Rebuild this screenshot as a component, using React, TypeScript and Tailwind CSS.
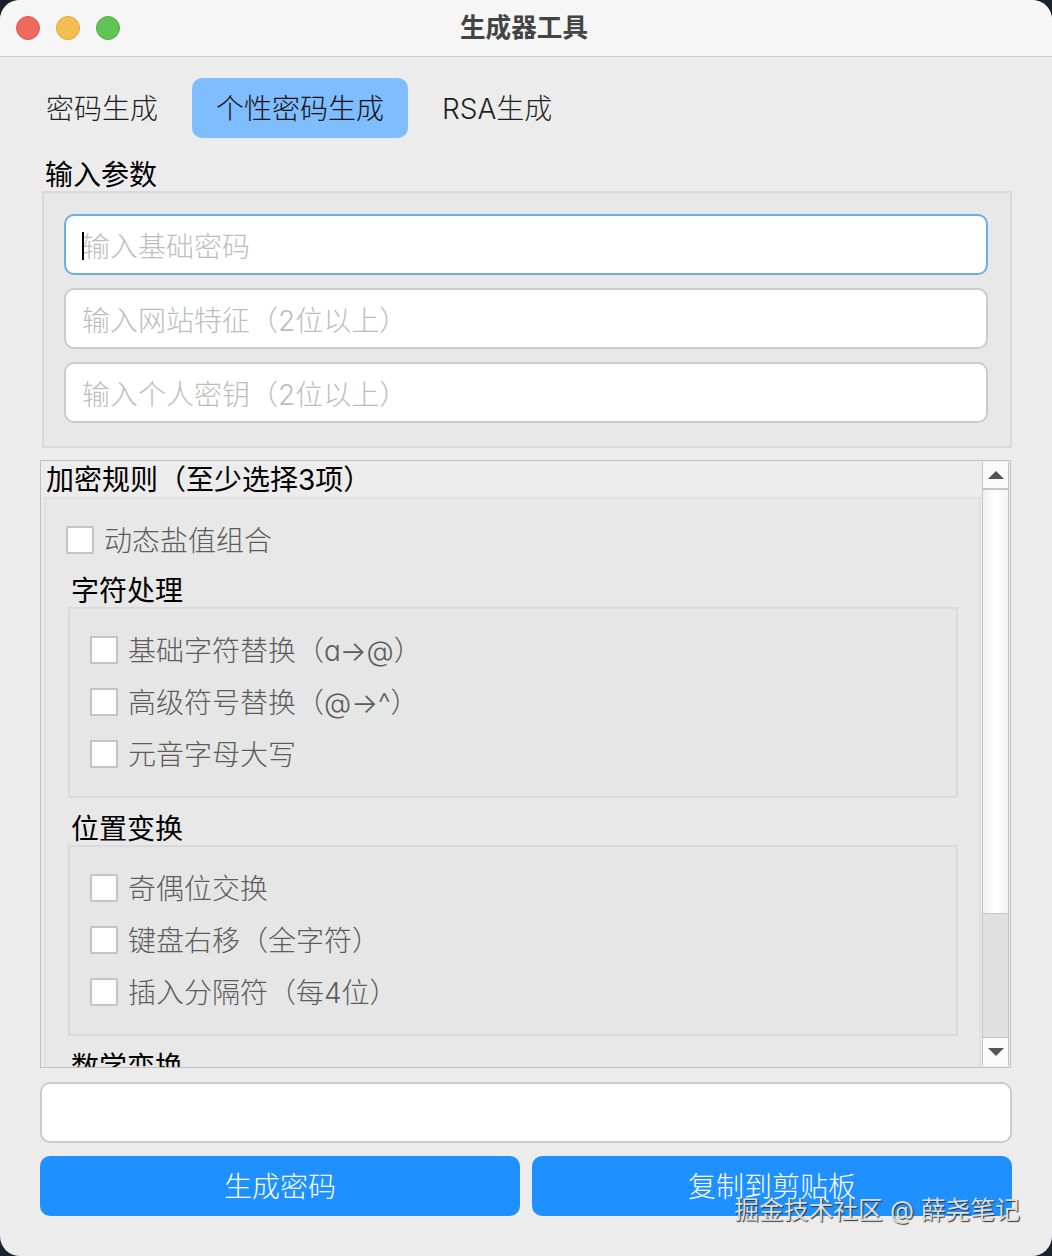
const FONT = "[font-family:'Inter','Noto_Sans_CJK_SC',sans-serif] [font-feature-settings:'cv11']";

function Check({ label }: { label: string }) {
  return (
    <div className="flex h-7 items-center gap-[10px]">
      <span className="h-7 w-7 shrink-0 border-2 border-[#c4c4c4] bg-white" />
      <span className="pt-0.5 text-[28px] leading-7 font-light text-[#5c5c5c]">{label}</span>
    </div>
  );
}

function Section({ title, items }: { title: string; items: string[] }) {
  return (
    <div className="ml-0.5 mt-3 first:mt-0">
      <div className="ml-[3px] h-[35px] text-[28px] leading-[38px] text-black">{title}</div>
      <div className="flex h-[191px] w-[890px] flex-col gap-6 border-2 border-[#dadada] bg-[#e6e6e6] pl-5 pt-[27px]">
        {items.map((item) => (
          <Check key={item} label={item} />
        ))}
      </div>
    </div>
  );
}

function ScrollBar() {
  return (
    <div className="flex h-[604px] w-[27px] shrink-0 flex-col border-x border-[#c4c4c4]">
      <div className="flex h-7 items-center justify-center border-b-2 border-[#c4c4c4] bg-[#fafafa]">
        <svg width="16" height="8" viewBox="0 0 16 8">
          <path d="M8 0L16 8H0Z" fill="#555555" />
        </svg>
      </div>
      <div className="h-[423px] bg-gradient-to-r from-[#f2f2f2] via-white to-[#f4f4f4]" />
      <div className="h-[125px] border-y border-[#c4c4c4] bg-[#e0e0e0]" />
      <div className="flex h-7 items-center justify-center bg-[#fafafa]">
        <svg width="16" height="8" viewBox="0 0 16 8">
          <path d="M0 0H16L8 8Z" fill="#555555" />
        </svg>
      </div>
    </div>
  );
}

export default function App() {
  const inputClass =
    'h-[61px] w-full rounded-[10px] border-2 bg-white px-4 pt-1 text-[28px] font-light outline-none placeholder:text-[#bdbdbd]';

  return (
    <div className={`h-[1256px] w-[1052px] overflow-hidden bg-[#1a2230] ${FONT}`}>
      <div className="relative flex h-full flex-col overflow-hidden rounded-[20px] bg-[#ececec]">
        {/* Title bar */}
        <div className="relative flex h-[57px] shrink-0 items-center justify-center border-b border-[#d0d0d0] bg-[#f6f6f6]">
          <div className="absolute left-4 top-4 flex gap-4">
            <span className="h-6 w-6 rounded-full border border-[#dc5c52] bg-[#ee6a5f]" />
            <span className="h-6 w-6 rounded-full border border-[#dea63f] bg-[#f5bd4f]" />
            <span className="h-6 w-6 rounded-full border border-[#53ad47] bg-[#61c454]" />
          </div>
          <span className="mr-1 text-[25.6px] font-bold text-[#444444]">生成器工具</span>
        </div>

        <div className="flex flex-col px-10">
          {/* Tabs */}
          <div className="-ml-[18px] mt-[21px] flex gap-[10px] text-[28px] font-light text-[#1f1f1f]">
            <div className="flex h-[60px] items-center px-6 pt-0.5">密码生成</div>
            <div className="flex h-[60px] items-center rounded-[10px] bg-[#80bdff] px-6 pt-0.5 text-[#111111]">个性密码生成</div>
            <div className="flex h-[60px] items-center px-6 pt-0.5">RSA生成</div>
          </div>

          {/* Input params */}
          <div className="ml-[5px] mt-[18px] h-[35px] text-[28px] leading-[38px] text-black">输入参数</div>
          <div className="relative ml-[2px] flex h-[257px] flex-col gap-[13px] border-2 border-[#dadada] bg-[#e8e8e8] pl-5 pr-[22px] pt-[21px]">
            <input className={`${inputClass} border-[#6aaee6]`} placeholder="输入基础密码" readOnly />
            <input className={`${inputClass} border-[#cbcbcb]`} placeholder="输入网站特征（2位以上）" readOnly />
            <input className={`${inputClass} border-[#cbcbcb]`} placeholder="输入个人密钥（2位以上）" readOnly />
            <span className="absolute left-[38px] top-[39px] h-7 w-0.5 bg-black" />
          </div>

          {/* Rules scroll area */}
          <div className="mt-3 flex h-[608px] w-[971px] items-start overflow-hidden border border-[#c0c0c0] bg-[#ececec]">
            <div className="h-[606px] w-[941px] shrink-0 overflow-hidden pl-[3px]">
              <div className="ml-[2px] h-9 text-[28px] leading-[38px] text-black">加密规则（至少选择3项）</div>
              <div className="h-[700px] w-[937px] border-2 border-[#e0e0e0] bg-[#e8e8e8] pl-5 pt-[27px]">
                <div className="mb-[18px]">
                  <Check label="动态盐值组合" />
                </div>
                <Section title="字符处理" items={['基础字符替换（a→@）', '高级符号替换（@→^）', '元音字母大写']} />
                <Section title="位置变换" items={['奇偶位交换', '键盘右移（全字符）', '插入分隔符（每4位）']} />
                <Section title="数学变换" items={[]} />
              </div>
            </div>
            <div className="mt-px">
              <ScrollBar />
            </div>
          </div>

          {/* Output */}
          <input
            className="mt-[14px] h-[61px] w-[972px] rounded-[10px] border-2 border-[#cbcbcb] bg-white outline-none"
            readOnly
          />

          {/* Actions */}
          <div className="mt-[13px] flex w-[972px] gap-3 text-[28px] font-light text-white">
            <div className="flex h-[60px] flex-1 items-center justify-center rounded-[10px] bg-[#1e90ff] pt-0.5">生成密码</div>
            <div className="flex h-[60px] flex-1 items-center justify-center rounded-[10px] bg-[#1e90ff] pt-0.5">复制到剪贴板</div>
          </div>
        </div>

        {/* Watermark */}
        <div className="absolute right-[32px] top-[1193px] whitespace-nowrap text-[24.8px] leading-[34px] text-[#dedede] [text-shadow:1px_1px_1px_#333333]">
          掘金技术社区 @ 薛尧笔记
        </div>
      </div>
    </div>
  );
}
